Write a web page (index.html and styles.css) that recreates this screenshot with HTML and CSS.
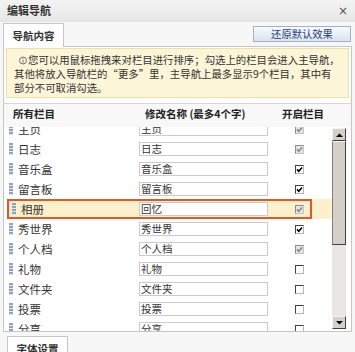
FILE: index.html
```html
<!DOCTYPE html>
<html lang="zh-CN">
<head>
<meta charset="utf-8">
<title>编辑导航</title>
<link rel="stylesheet" href="styles.css">
</head>
<body>
<div class="titlebar"><span class="title">编辑导航</span><span class="close">×</span></div>
<div class="tabs">
  <div class="tab">导航内容</div>
  <button class="reset">还原默认效果</button>
</div>
<div class="panel">
  <div class="notice">
    <p class="ntext"><svg class="info" width="8" height="9" viewBox="0 0 8 9"><circle cx="4" cy="4.5" r="3.5" fill="none" stroke="#707070"/><path d="M4 2.3v1M4 4v2.8" stroke="#707070"/></svg>您可以用鼠标拖拽来对栏目进行排序；勾选上的栏目会进入主导航，<br>其他将放入导航栏的<span class="ql">“</span>更多<span class="qr">”</span>里，主导航上最多显示9个栏目，其中有<br>部分不可取消勾选。</p>
  </div>
  <div class="grid">
    <div class="head"><span class="h1">所有栏目</span><span class="h2">修改名称 (最多4个字)</span><span class="h3">开启栏目</span></div>
    <div class="view">
      <div class="list">
        <div class="rows">
          <div class="row"><div class="rin"><span class="grip"></span><span class="name">主页</span><span class="inp">主页</span><span class="cb dis"><svg viewBox="0 0 7 7"><path d="M1 3.4L2.8 5.3L6 1.6"/></svg></span></div></div>
          <div class="row"><div class="rin"><span class="grip"></span><span class="name">日志</span><span class="inp">日志</span><span class="cb dis"><svg viewBox="0 0 7 7"><path d="M1 3.4L2.8 5.3L6 1.6"/></svg></span></div></div>
          <div class="row"><div class="rin"><span class="grip"></span><span class="name">音乐盒</span><span class="inp">音乐盒</span><span class="cb on"><svg viewBox="0 0 7 7"><path d="M1 3.4L2.8 5.3L6 1.6"/></svg></span></div></div>
          <div class="row"><div class="rin"><span class="grip"></span><span class="name">留言板</span><span class="inp">留言板</span><span class="cb on"><svg viewBox="0 0 7 7"><path d="M1 3.4L2.8 5.3L6 1.6"/></svg></span></div></div>
          <div class="row drag"><div class="rin"><span class="grip"></span><span class="name">相册</span><span class="inp">回忆</span><span class="cb dis"><svg viewBox="0 0 7 7"><path d="M1 3.4L2.8 5.3L6 1.6"/></svg></span></div></div>
          <div class="row"><div class="rin"><span class="grip"></span><span class="name">秀世界</span><span class="inp">秀世界</span><span class="cb on"><svg viewBox="0 0 7 7"><path d="M1 3.4L2.8 5.3L6 1.6"/></svg></span></div></div>
          <div class="row"><div class="rin"><span class="grip"></span><span class="name">个人档</span><span class="inp">个人档</span><span class="cb dis"><svg viewBox="0 0 7 7"><path d="M1 3.4L2.8 5.3L6 1.6"/></svg></span></div></div>
          <div class="row"><div class="rin"><span class="grip"></span><span class="name">礼物</span><span class="inp">礼物</span><span class="cb"></span></div></div>
          <div class="row"><div class="rin"><span class="grip"></span><span class="name">文件夹</span><span class="inp">文件夹</span><span class="cb"></span></div></div>
          <div class="row"><div class="rin"><span class="grip"></span><span class="name">投票</span><span class="inp">投票</span><span class="cb"></span></div></div>
          <div class="row"><div class="rin"><span class="grip"></span><span class="name">分享</span><span class="inp">分享</span><span class="cb"></span></div></div>
        </div>
      </div>
      <div class="scroll">
        <div class="sbb"><svg width="7" height="4" viewBox="0 0 7 4"><path d="M0 4L3.5 0.5L7 4Z" fill="#000"/></svg></div>
        <div class="thumb"></div>
        <div class="track"></div>
        <div class="sbb"><svg width="7" height="4" viewBox="0 0 7 4"><path d="M0 0L3.5 3.5L7 0Z" fill="#000"/></svg></div>
      </div>
    </div>
  </div>
</div>
<div class="tab tab2">字体设置</div>
</body>
</html>
```
FILE: styles.css
```css
* { box-sizing: border-box; }
html, body { margin: 0; padding: 0; }
body {
  width: 355px;
  height: 352px;
  overflow: hidden;
  background: #f7f7f7;
  font-family: "Noto Sans CJK SC", "Liberation Sans", sans-serif;
  color: #333;
}
.titlebar {
  height: 22px;
  display: flex;
  align-items: center;
  justify-content: space-between;
  padding: 0 7px;
  background: linear-gradient(#f3f3f3, #e7e7e7);
  border-bottom: 1px solid #e3e3e3;
}
.title { font-size: 11px; font-weight: bold; line-height: 1; color: #333; }
.close { font-family: "DejaVu Sans", sans-serif; font-size: 12px; line-height: 1; color: #555; }
.tabs {
  height: 25px;
  margin: 0 3px;
  display: flex;
  align-items: flex-end;
  justify-content: space-between;
  border-bottom: 1px solid #c6c6c6;
}
.tab {
  width: 61px;
  height: 24px;
  margin-bottom: -1px;
  border: 1px solid #c6c6c6;
  border-bottom: none;
  background: #fff;
  font-size: 10.5px;
  font-weight: bold;
  line-height: 1;
  color: #333;
  display: flex;
  align-items: center;
  justify-content: center;
  padding-top: 2px;
}
.reset {
  width: 98px;
  height: 16px;
  margin: 0 1px 4px 0;
  padding: 0;
  border: 1px solid #a2b2c9;
  background: linear-gradient(#f8fafd, #dce3ee);
  font-family: "Noto Sans CJK SC", sans-serif;
  font-size: 10.3px;
  line-height: 14px;
  color: #1d3f80;
}
.panel {
  height: 285px;
  margin: 0 3px;
  border: 1px solid #c6c6c6;
  border-top: none;
  background: #fff;
  padding: 1px 2px 0 2px;
}
.notice {
  height: 50px;
  border: 1px solid #efe0a6;
  background: #fcf5d8;
  padding: 4px 0 0 7px;
}
.ntext {
  margin: 0;
  font-size: 10.4px;
  line-height: 14px;
  white-space: nowrap;
  color: #333;
}
.info { margin: 0 1px 0 5px; vertical-align: -1px; }
.ql, .qr { display: inline-block; width: 1em; }
.ql { text-align: right; }
.qr { text-align: left; }
.grid {
  margin: 5px -2px 0 -2px;
  border-top: 1px solid #d6d6d6;
}
.head {
  height: 23px;
  display: flex;
  align-items: center;
  padding-bottom: 2px;
  background: #f8f8f8;
  font-size: 10.5px;
  font-weight: bold;
  color: #222;
  line-height: 1;
}
.h1 { width: 141px; padding-left: 9px; }
.h2 { width: 137px; }
.view { height: 204px; display: flex; overflow: hidden; }
.list { width: 328px; overflow: hidden; }
.rows { margin-top: -8px; }
.row { height: 20px; display: flex; align-items: center; }
.rin {
  margin-left: 3px;
  width: 305px;
  height: 20px;
  border: 2px solid transparent;
  display: flex;
  align-items: center;
}
.row.drag { background: linear-gradient(to right, transparent 3px, #fcf1cc 3px); }
.row.drag .rin { border-color: #dd5a2c; }
.grip {
  width: 4px;
  height: 12px;
  background: repeating-linear-gradient(to bottom, #8fa3c2 0 2px, #dde4ee 2px 3px);
}
.name { width: 121px; margin-left: 5px; font-size: 11.5px; line-height: 14px; color: #333; }
.drag .grip { margin-left: 3px; }
.drag .name { width: 118px; }
.inp {
  width: 129px;
  height: 14px;
  border: 1px solid #cbcbcb;
  background: #fff;
  font-size: 10.5px;
  line-height: 12px;
  padding-left: 1px;
  color: #333;
}
.cb {
  width: 9px;
  height: 9px;
  margin-left: 27px;
  border: 1px solid;
  border-color: #404040 #b4b4b4 #b4b4b4 #404040;
  background: #fff;
  display: flex;
  align-items: center;
  justify-content: center;
}
.cb svg { width: 7px; height: 7px; fill: none; stroke-width: 1.6; }
.cb.on svg { stroke: #000; }
.cb.dis { background: #e4e4e4; border-color: #8e8e8e #c4c4c4 #c4c4c4 #8e8e8e; }
.cb.dis svg { stroke: #8a8a8a; }
.scroll {
  width: 14px;
  margin: 1px 5px 2px 0;
  display: flex;
  flex-direction: column;
}
.sbb {
  height: 13px;
  background: #d4d0c8;
  border: 1px solid;
  border-color: #f4f4f4 #404040 #404040 #f4f4f4;
  display: flex;
  align-items: center;
  justify-content: center;
}
.thumb {
  height: 104px;
  background: #d4d0c8;
  border: 1px solid;
  border-color: #f4f4f4 #404040 #404040 #808080;
}
.track { flex: 1; background: #e9e7e3; }
.tab2 {
  margin: 4px 0 0 7px;
  border-bottom: 1px solid #c6c6c6;
}
```
